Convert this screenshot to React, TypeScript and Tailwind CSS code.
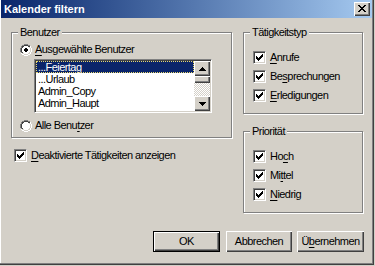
import React from 'react'

type PixProps = { map: string[]; colors: Record<string, string> }

// tiny pixel-art helper for the win2k glyphs
const Pix = ({ map, colors }: PixProps) => {
  const w = map[0].length
  const h = map.length
  const rects: React.ReactElement[] = []
  map.forEach((row, y) =>
    row.split('').forEach((ch, x) => {
      if (colors[ch]) rects.push(<rect key={x + '-' + y} x={x} y={y} width={1} height={1} fill={colors[ch]} />)
    })
  )
  return (
    <svg width={w} height={h} viewBox={`0 0 ${w} ${h}`} shapeRendering="crispEdges" className="block shrink-0">
      {rects}
    </svg>
  )
}

const RADIO = [
  '....GGGG....',
  '..GGDDDDGG..',
  '.GDDWWWWDDH.',
  '.GDWWWWWWLH.',
  'GDWWWWWWWWLH',
  'GDWWWWWWWWLH',
  'GDWWWWWWWWLH',
  'GDWWWWWWWWLH',
  '.GDWWWWWWLH.',
  '.HLLWWWWLLH.',
  '..HHLLLLHH..',
  '....HHHH....',
]
const RADIO_ON = [
  '....GGGG....',
  '..GGDDDDGG..',
  '.GDDWWWWDDH.',
  '.GDWWWWWWLH.',
  'GDWWWXXWWWLH',
  'GDWWXXXXWWLH',
  'GDWWXXXXWWLH',
  'GDWWWXXWWWLH',
  '.GDWWWWWWLH.',
  '.HLLWWWWLLH.',
  '..HHLLLLHH..',
  '....HHHH....',
]
const radioColors = { G: '#808080', D: '#404040', W: '#ffffff', H: '#ffffff', L: '#d4d0c8', X: '#000000' }

const CHECK = ['......X', '.....XX', 'X...XXX', 'XX.XXX.', 'XXXXX..', '.XXX...', '..X....']
const CLOSE = ['XX....XX', '.XX..XX.', '..XXXX..', '...XX...', '..XXXX..', '.XX..XX.', 'XX....XX']
const UP = ['...X...', '..XXX..', '.XXXXX.', 'XXXXXXX']
const DOWN = ['XXXXXXX', '.XXXXX.', '..XXX..', '...X...']
const black = { X: '#000000' }

const bevel =
  'bg-[#d4d0c8] shadow-[inset_1px_1px_0_#ffffff,inset_-1px_-1px_0_#404040,inset_-2px_-2px_0_#808080]'

const Radio = ({ checked, children }: { checked?: boolean; children: React.ReactNode }) => (
  <div className="flex items-center gap-[3px] h-[13px] ml-[8px]">
    <Pix map={checked ? RADIO_ON : RADIO} colors={radioColors} />
    <span className="leading-[13px]">{children}</span>
  </div>
)

const Check = ({ children, className }: { children: React.ReactNode; className?: string }) => (
  <div className={'flex items-center gap-[4px] h-[13px] ' + (className ?? '')}>
    <div className="w-[13px] h-[13px] shrink-0 bg-white border border-t-[#808080] border-l-[#808080] border-r-white border-b-white shadow-[inset_1px_1px_0_#404040,inset_-1px_-1px_0_#d4d0c8] flex items-center justify-center">
      <Pix map={CHECK} colors={black} />
    </div>
    <span className="leading-[13px] whitespace-nowrap">{children}</span>
  </div>
)

const Group = ({ label, className, children }: { label: string; className?: string; children: React.ReactNode }) => (
  <div
    className={
      'flex flex-col border border-[#808080] shadow-[1px_1px_0_#ffffff,inset_1px_1px_0_#ffffff] ' + (className ?? '')
    }
  >
    <span className="-mt-[7px] ml-[6px] self-start px-[2px] bg-[#d4d0c8] leading-[13px]">{label}</span>
    {children}
  </div>
)

const U = ({ children }: { children: React.ReactNode }) => (
  <span className="underline underline-offset-[2px] decoration-1">{children}</span>
)

const users = ['...Feiertag', '...Urlaub', 'Admin_Copy', 'Admin_Haupt']

export default function App() {
  return (
    <div
      className="w-[375px] h-[266px] bg-[#d4d0c8] text-black text-[11px] tracking-[-0.55px] overflow-hidden"
      style={{ fontFamily: '"Liberation Sans", Arial, sans-serif' }}
    >
      <div className="w-[374px] h-[265px] pl-[1px] pr-[2px] flex flex-col shadow-[inset_-1px_-1px_0_#404040,inset_-2px_-2px_0_#808080,inset_1px_0_0_#ffffff]">
        {/* title bar */}
        <div className="h-[18px] flex items-center bg-linear-to-r from-[#0a246a] to-[#a6caf0] pl-[3px] pr-[2px]">
          <span className="flex-1 font-bold text-white tracking-normal leading-[18px]">Kalender filtern</span>
          <div className={'w-[16px] h-[14px] flex items-center justify-center pr-[1px] pb-[1px] ' + bevel}>
            <Pix map={CLOSE} colors={black} />
          </div>
        </div>

        <div className="pl-[10px] pt-[14px]">
          <div className="w-[352px] flex flex-col">
            <div className="flex items-start gap-[11px]">
              {/* left column */}
              <div className="w-[221px] flex flex-col">
                <Group label="Benutzer" className="h-[106px]">
                  <div className="mt-[4px]">
                    <Radio checked>
                      <U>A</U>usgewählte Benutzer
                    </Radio>
                  </div>
                  <div className="ml-[22px] mt-[3px] w-[178px] h-[54px] flex bg-white p-[1px] border border-t-[#808080] border-l-[#808080] border-r-white border-b-white shadow-[inset_1px_1px_0_#404040,inset_-1px_-1px_0_#d4d0c8]">
                    <div className="flex-1 overflow-hidden flex flex-col">
                      {users.map((u, i) => (
                        <div
                          key={u}
                          className={
                            'h-[12px] shrink-0 leading-[12px] pl-[2px] whitespace-nowrap ' +
                            (i === 0
                              ? 'bg-[#0a246a] text-white outline-1 outline-dotted outline-[#e8d870] -outline-offset-1'
                              : '')
                          }
                        >
                          {u}
                        </div>
                      ))}
                    </div>
                    <div className="w-[16px] flex flex-col">
                      <div className={'h-[15px] flex items-center justify-center ' + bevel}>
                        <Pix map={UP} colors={black} />
                      </div>
                      <div className={'h-[7px] ' + bevel} />
                      <div className="flex-1 bg-[repeating-conic-gradient(#ffffff_0_25%,#d4d0c8_0_50%)] bg-[length:2px_2px]" />
                      <div className={'h-[15px] flex items-center justify-center ' + bevel}>
                        <Pix map={DOWN} colors={black} />
                      </div>
                    </div>
                  </div>
                  <div className="mt-[6px]">
                    <Radio>
                      Alle Benu<U>t</U>zer
                    </Radio>
                  </div>
                </Group>
                <Check className="mt-[11px] ml-[3px]">
                  <U>D</U>eaktivierte Tätigkeiten anzeigen
                </Check>
              </div>

              {/* right column */}
              <div className="w-[120px] flex flex-col">
                <Group label="Tätigkeitstyp" className="h-[82px]">
                  <div className="mt-[12px] ml-[9px] flex flex-col gap-[6px]">
                    <Check>
                      <U>A</U>nrufe
                    </Check>
                    <Check>
                      Be<U>s</U>prechungen
                    </Check>
                    <Check>
                      <U>E</U>rledigungen
                    </Check>
                  </div>
                </Group>
                <Group label="Priorität" className="h-[82px] mt-[17px]">
                  <div className="mt-[12px] ml-[9px] flex flex-col gap-[6px]">
                    <Check>
                      Ho<U>c</U>h
                    </Check>
                    <Check>
                      Mi<U>t</U>tel
                    </Check>
                    <Check>
                      <U>N</U>iedrig
                    </Check>
                  </div>
                </Group>
              </div>
            </div>

            {/* buttons */}
            <div className="mt-[18px] flex justify-end -mr-[1px]">
              <div className="w-[67px] h-[21px] border border-black flex items-center justify-center bg-[#d4d0c8] shadow-[inset_1px_1px_0_#ffffff,inset_-1px_-1px_0_#404040,inset_-2px_-2px_0_#808080]">
                OK
              </div>
              <div className={'ml-[6px] w-[66px] h-[21px] flex items-center justify-center ' + bevel}>Abbrechen</div>
              <div className={'ml-[5px] w-[67px] h-[21px] flex items-center justify-center ' + bevel}>
                Ü<U>b</U>ernehmen
              </div>
            </div>
          </div>
        </div>
      </div>
    </div>
  )
}
